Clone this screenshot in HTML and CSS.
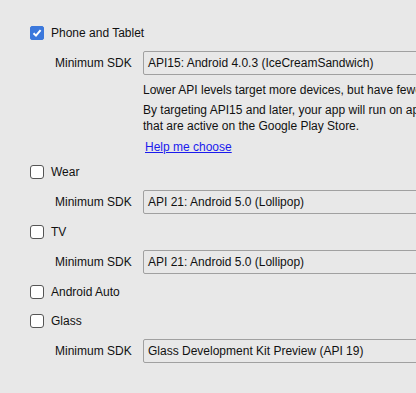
FILE: index.html
```html
<!DOCTYPE html>
<html lang="en">
	<head>
		<meta charset="UTF-8" />
		<title>Target Android Devices</title>
		<link rel="stylesheet" href="styles.css">
	</head>
	<body>
		<div class="form">
			<label class="check">
				<span class="box checked">
					<svg width="10" height="10" viewBox="0 0 10 10">
						<path d="M1.5 5.2 L4 7.6 L8.6 2.2" fill="none" stroke="#fff" stroke-width="2" />
					</svg>
				</span>
				Phone and Tablet
			</label>
			<div class="sdk">
				<span class="sdk-label">Minimum SDK</span>
				<div class="combo">API15: Android 4.0.3 (IceCreamSandwich)</div>
			</div>
			<div class="info">
				<p>Lower API levels target more devices, but have fewer features available.</p>
				<p>By targeting API15 and later, your app will run on approximately 94.0% of the devices<br />that are active on the Google Play Store.</p>
				<a href="#">Help me choose</a>
			</div>

			<label class="check"><span class="box"></span>Wear</label>
			<div class="sdk">
				<span class="sdk-label">Minimum SDK</span>
				<div class="combo">API 21: Android 5.0 (Lollipop)</div>
			</div>

			<label class="check"><span class="box"></span>TV</label>
			<div class="sdk">
				<span class="sdk-label">Minimum SDK</span>
				<div class="combo">API 21: Android 5.0 (Lollipop)</div>
			</div>

			<label class="check"><span class="box"></span>Android Auto</label>

			<label class="check"><span class="box"></span>Glass</label>
			<div class="sdk">
				<span class="sdk-label">Minimum SDK</span>
				<div class="combo">Glass Development Kit Preview (API 19)</div>
			</div>
		</div>
	</body>
</html>
```

FILE: styles.css
```css
body {
	margin: 0;
	background: #e8e8e8;
	color: #111;
	font-family: "Liberation Sans", Arial, sans-serif;
	font-size: 12px;
	overflow: hidden;
	white-space: nowrap;
}

.form {
	display: flex;
	flex-direction: column;
	gap: 7px;
	padding: 22px 0 0 30px;
}

.check {
	display: flex;
	align-items: center;
	gap: 7px;
	height: 22px;
}

.box {
	display: flex;
	align-items: center;
	justify-content: center;
	box-sizing: border-box;
	width: 14px;
	height: 14px;
	background: #fff;
	border: 1px solid #555;
	border-radius: 3px;
}

.box.checked {
	background: #3b78dc;
	border-color: #3b78dc;
	border-radius: 2px;
}

.sdk {
	display: flex;
	align-items: center;
	height: 24px;
}

.sdk-label {
	flex-shrink: 0;
	width: 88px;
	padding-left: 25px;
}

.combo {
	flex-shrink: 0;
	box-sizing: border-box;
	width: 320px;
	height: 24px;
	line-height: 22px;
	padding-left: 4px;
	border: 1px solid #a0a0a0;
	border-radius: 2px;
}

.info {
	margin: 0 0 -1px 113px;
	line-height: 16px;
}

.info p {
	margin: 0 0 4px;
}

.info a {
	display: inline-block;
	margin: 1px 0 0 2px;
	color: #1a1aee;
}
```
